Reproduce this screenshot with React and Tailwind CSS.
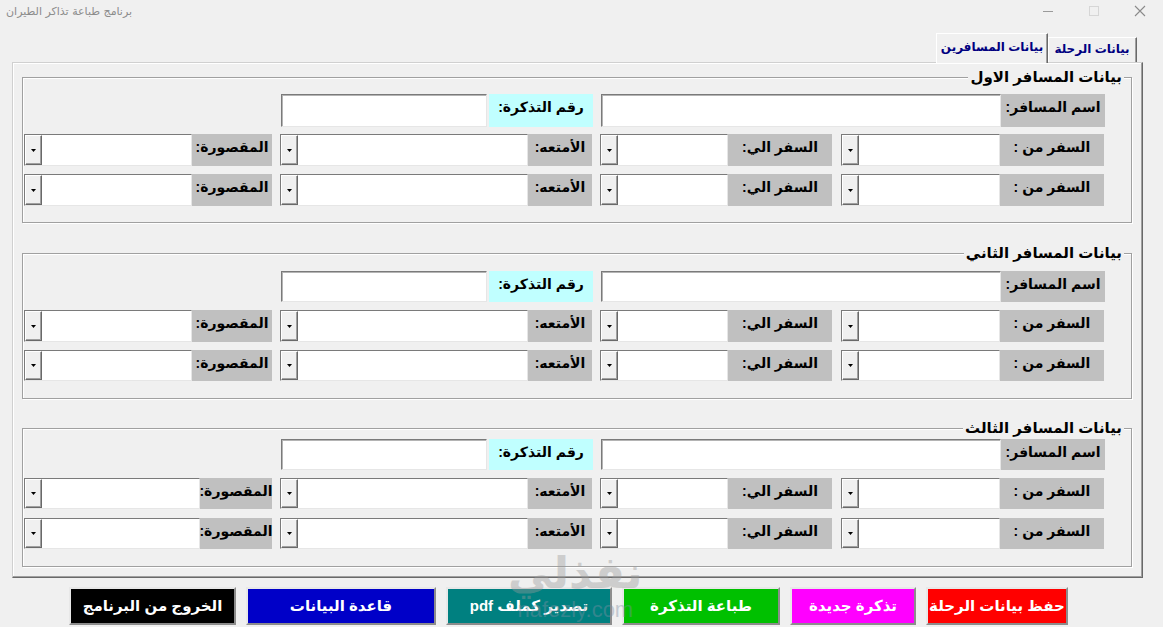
import React from "react";

function Label({ w, cyan, children }) {
  return (
    <div
      dir="rtl"
      className={`${w} h-full shrink-0 flex justify-center items-start pt-[4px] whitespace-nowrap text-[14px] leading-[18px] font-bold text-black ${cyan ? "bg-[#c0ffff]" : "bg-[#c0c0c0]"}`}
    >
      {children}
    </div>
  );
}

function TextBox({ w }) {
  return (
    <div
      className={`${w} h-full shrink-0 bg-white border border-t-[#7a7a7a] border-l-[#7a7a7a] border-b-[#e6e6e6] border-r-[#e6e6e6] shadow-[inset_1px_1px_0_#b4b4b4]`}
    />
  );
}

function Combo({ w }) {
  return (
    <div
      className={`${w} h-full shrink-0 flex bg-white border border-t-[#7a7a7a] border-l-[#7a7a7a] border-b-[#e6e6e6] border-r-[#e6e6e6]`}
    >
      <div className="w-[17px] h-full shrink-0 flex items-center justify-center bg-[#f0f0f0] border border-t-white border-l-white border-r-[#696969] border-b-[#696969] shadow-[inset_-1px_-1px_0_#a0a0a0]">
        <svg width="5" height="3" viewBox="0 0 5 3">
          <path d="M0 0H5L2.5 3Z" fill="#000" />
        </svg>
      </div>
    </div>
  );
}

function NameRow({ h }) {
  return (
    <div className={`flex ${h} shrink-0`}>
      <div className="w-[258px] shrink-0" />
      <TextBox w="w-[206px]" />
      <div className="w-[2px] shrink-0" />
      <Label w="w-[104px]" cyan>
        رقم التذكرة:
      </Label>
      <div className="w-[8px] shrink-0" />
      <TextBox w="w-[400px]" />
      <Label w="w-[104px]">اسم المسافر:</Label>
    </div>
  );
}

function TravelRow({ h, wide }) {
  return (
    <div className={`flex ${h} shrink-0`}>
      <div className="w-[1px] shrink-0" />
      {wide ? (
        <>
          <Combo w="w-[176px]" />
          <Label w="w-[72px]">المقصورة:</Label>
        </>
      ) : (
        <>
          <Combo w="w-[168px]" />
          <Label w="w-[80px]">المقصورة:</Label>
        </>
      )}
      <div className="w-[8px] shrink-0" />
      <Combo w="w-[248px]" />
      <Label w="w-[64px]">الأمتعه:</Label>
      <div className="w-[8px] shrink-0" />
      <Combo w="w-[128px]" />
      <Label w="w-[104px]">السفر الي:</Label>
      <div className="w-[9px] shrink-0" />
      <Combo w="w-[159px]" />
      <Label w="w-[104px]">السفر من :</Label>
    </div>
  );
}

function GroupTitle({ children }) {
  return (
    <div
      dir="rtl"
      className="absolute right-[7px] top-[-11px] bg-[#f0f0f0] px-[2px] whitespace-nowrap text-[15px] leading-[20px] font-bold text-black"
    >
      {children}
    </div>
  );
}

const groupBox =
  "relative ml-[9px] w-[1110px] shrink-0 border border-[#a0a0a0] shadow-[inset_1px_1px_0_#ffffff,1px_1px_0_#ffffff] flex flex-col";

function Btn({ cls, children }) {
  return (
    <div
      dir="rtl"
      className={`${cls} h-[38px] shrink-0 flex items-center justify-center whitespace-nowrap border-2 border-t-[#e8e8e8] border-l-[#e8e8e8] border-b-[#8c8c8c] border-r-[#8c8c8c] text-white text-[15px] font-bold`}
    >
      {children}
    </div>
  );
}

export default function App() {
  return (
    <div className="relative w-[1163px] h-[627px] overflow-hidden bg-[#f0f0f0] flex flex-col font-['Liberation_Sans','DejaVu_Sans',sans-serif] select-none">
      {/* title bar */}
      <div className="h-[30px] shrink-0 flex items-start">
        <div
          dir="rtl"
          className="ml-[6px] mt-[4px] whitespace-nowrap text-[11px] leading-[16px] text-[#8c8c8c] font-['DejaVu_Sans',sans-serif]"
        >
          برنامج طباعة تذاكر الطيران
        </div>
        <div className="ml-auto flex items-start">
          <div className="w-[46px] h-[22px] flex items-center justify-center">
            <svg width="12" height="12" viewBox="0 0 12 12">
              <path d="M1 6.5H11" stroke="#9a9a9a" strokeWidth="1" />
            </svg>
          </div>
          <div className="w-[46px] h-[22px] flex items-center justify-center">
            <svg width="12" height="12" viewBox="0 0 12 12">
              <rect x="1.5" y="1.5" width="9" height="9" fill="none" stroke="#d6d6d6" strokeWidth="1" />
            </svg>
          </div>
          <div className="w-[46px] h-[22px] flex items-center justify-center">
            <svg width="12" height="12" viewBox="0 0 12 12">
              <path d="M1 1L11 11M11 1L1 11" stroke="#8a8a8a" strokeWidth="1.1" />
            </svg>
          </div>
        </div>
      </div>

      {/* tab strip */}
      <div className="h-[32px] shrink-0 flex items-end justify-end pr-[26px]">
        <div
          dir="rtl"
          className="relative z-10 mb-[-1px] w-[112px] h-[30px] bg-[#f0f0f0] flex justify-center items-start pt-[5px] whitespace-nowrap border-t border-l border-r border-t-white border-l-white border-r-[#696969] shadow-[inset_-1px_0_0_#a0a0a0] text-[12px] leading-[17px] font-bold text-[#000080]"
        >
          بيانات المسافرين
        </div>
        <div
          dir="rtl"
          className="w-[89px] h-[25px] bg-[#f0f0f0] flex justify-center items-start pt-[3px] whitespace-nowrap border-t border-r border-t-white border-r-[#696969] shadow-[inset_-1px_0_0_#a0a0a0,inset_1px_0_0_#ffffff] text-[12px] leading-[17px] font-bold text-[#000080]"
        >
          بيانات الرحلة
        </div>
      </div>

      {/* tab panel */}
      <div className="ml-[12px] w-[1131px] h-[516px] shrink-0 flex flex-col border border-t-[#d0d0d0] border-l-[#d0d0d0] border-r-[#696969] border-b-[#696969] shadow-[inset_-1px_-1px_0_#a0a0a0,inset_1px_1px_0_#ffffff]">
        {/* group 1 */}
        <div className={`${groupBox} mt-[14px] h-[146px]`}>
          <GroupTitle>بيانات المسافر الاول</GroupTitle>
          <div className="h-[16px] shrink-0" />
          <NameRow h="h-[33px]" />
          <div className="h-[7px] shrink-0" />
          <TravelRow h="h-[32px]" />
          <div className="h-[8px] shrink-0" />
          <TravelRow h="h-[32px]" />
        </div>

        {/* group 2 */}
        <div className={`${groupBox} mt-[30px] h-[146px]`}>
          <GroupTitle>بيانات المسافر الثاني</GroupTitle>
          <div className="h-[17px] shrink-0" />
          <NameRow h="h-[31px]" />
          <div className="h-[8px] shrink-0" />
          <TravelRow h="h-[32px]" />
          <div className="h-[8px] shrink-0" />
          <TravelRow h="h-[31px]" />
        </div>

        {/* group 3 */}
        <div className={`${groupBox} mt-[29px] h-[139px]`}>
          <GroupTitle>بيانات المسافر الثالث</GroupTitle>
          <div className="h-[10px] shrink-0" />
          <NameRow h="h-[31px]" />
          <div className="h-[8px] shrink-0" />
          <TravelRow h="h-[31px]" wide />
          <div className="h-[9px] shrink-0" />
          <TravelRow h="h-[31px]" wide />
        </div>
      </div>

      {/* buttons */}
      <div className="mt-[9px] flex shrink-0">
        <Btn cls="ml-[69px] w-[167px] bg-black">الخروج من البرنامج</Btn>
        <Btn cls="ml-[10px] w-[190px] bg-[#0000c8]">قاعدة البيانات</Btn>
        <Btn cls="ml-[10px] w-[166px] bg-[#008080]">تصدير كملف pdf</Btn>
        <Btn cls="ml-[10px] w-[158px] bg-[#00c000]">طباعة التذكرة</Btn>
        <Btn cls="ml-[10px] w-[126px] bg-[#ff00ff]">تذكرة جديدة</Btn>
        <Btn cls="ml-[10px] w-[142px] bg-[#ff0000]">حفظ بيانات الرحلة</Btn>
      </div>

      {/* watermark */}
      <div className="absolute left-[508px] top-[548px] pointer-events-none flex flex-col items-center opacity-40">
        <div dir="rtl" className="text-[44px] leading-[50px] font-bold text-[#9a9a9a]">
          نفذلي
        </div>
        <div className="text-[22px] leading-[24px] text-[#7f8fa3] font-['Liberation_Sans',sans-serif]">
          nafezly.com
        </div>
      </div>
    </div>
  );
}
